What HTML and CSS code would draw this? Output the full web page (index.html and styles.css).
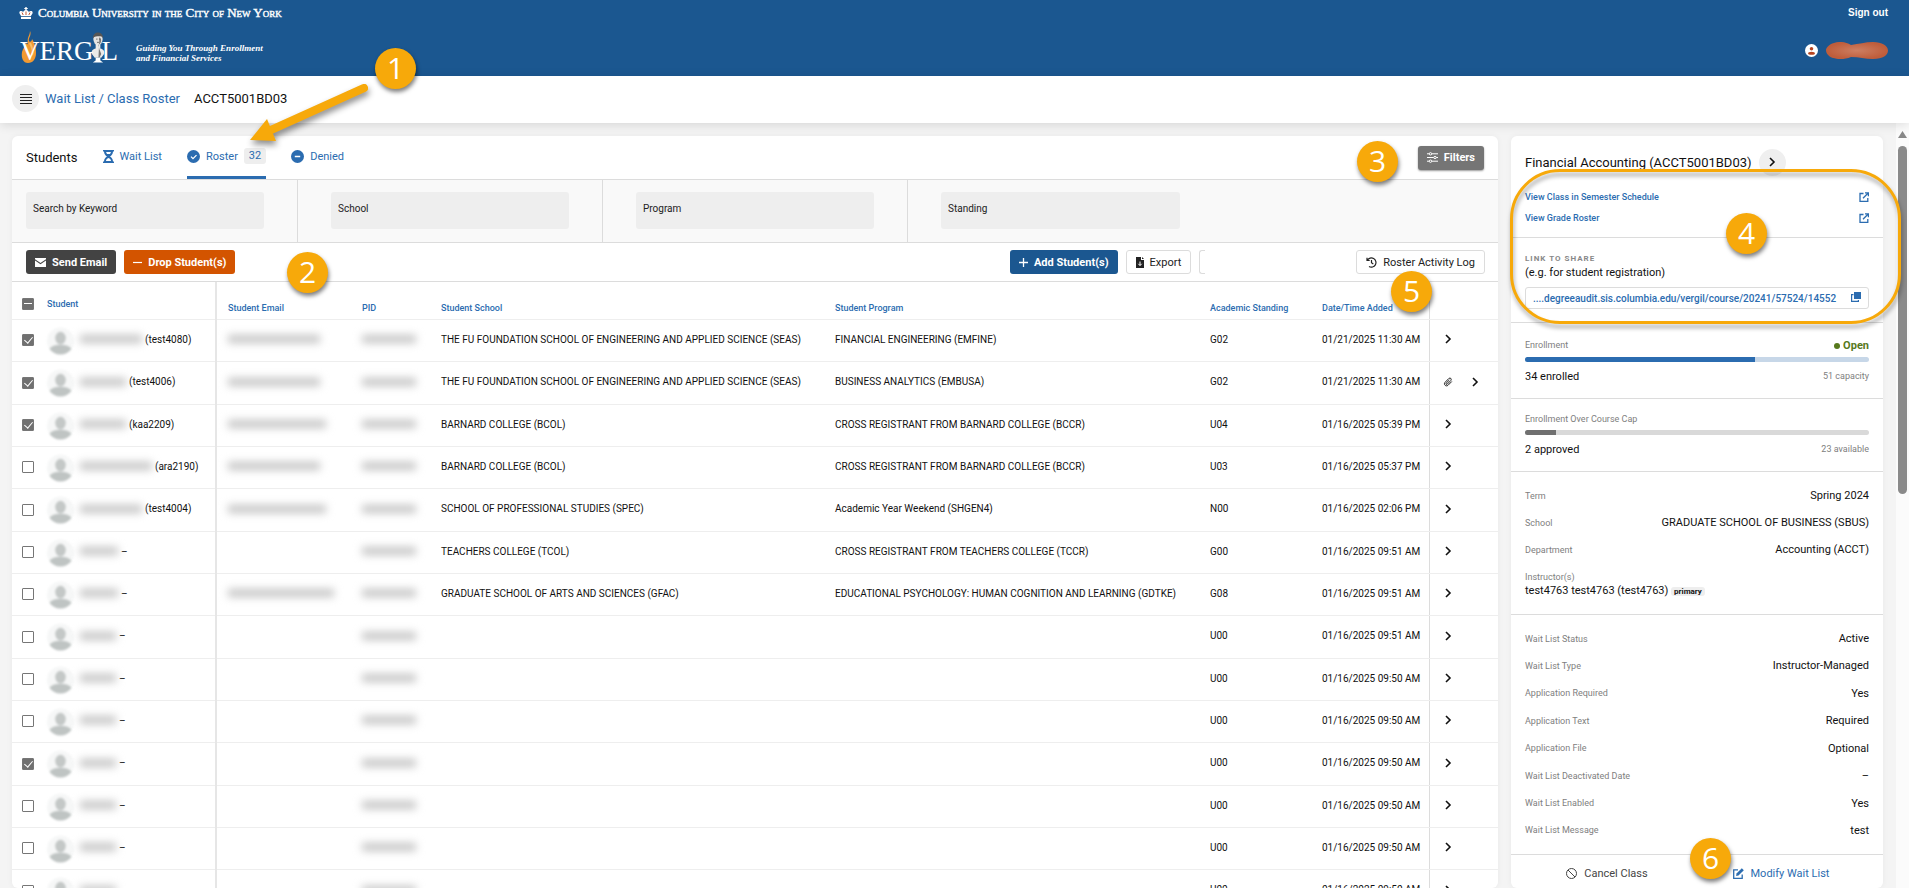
FILE: index.html
```html
<!DOCTYPE html>
<html lang="en">
<head>
  <meta charset="UTF-8" />
  <meta name="viewport" content="width=device-width, initial-scale=1.0"/>
  <title>Vergil - Class Roster</title>
  <link rel="stylesheet" href="styles.css">
</head>
<body>
  <!-- shared icons -->
  <svg class="sprite" aria-hidden="true">
    <symbol id="chevron" viewBox="0 0 10 10"><path d="M3 1l4 4-4 4" fill="none" stroke="currentColor" stroke-width="1.6"/></symbol>
    <symbol id="avatar" viewBox="0 0 28 28">
      <circle cx="14" cy="14" r="14" fill="#f6f7f7"/>
      <ellipse cx="14" cy="11" rx="5.5" ry="6.5" fill="#c4c8c7"/>
      <path d="M2.5 22c3-3 7-4 11.500-4s8.500 1 11.500 4a14 14 0 0 1-23 0z" fill="#bfc4c3"/>
    </symbol>
    <symbol id="external" viewBox="0 0 10 10"><path d="M4.500 1.500H1v7.800h7.800V6M6 .8h3.400v3.400M9.200 1L4 6.200" fill="none" stroke="currentColor" stroke-width="1.300"/></symbol>
  </svg>

  <header class="site-header">
    <div class="university">
      <svg class="crown" viewBox="0 0 14 12" fill="#fff"><path d="M6.300 0h1.400v1h1v1h-1v1.200c1.500.2 2 1 2 2C11 3.500 14 3.800 13.600 6c-.2 1.200-1.300 2-1.600 3H2C1.700 8 .6 7.200.4 6 0 3.800 3 3.500 4.300 5.200c0-1 .5-1.800 2-2V2h-1V1h1z"/><path d="M2 9.800h10V12H2z"/><path d="M3 5.500l1.200 2.500M11 5.500L9.800 8M7 4.500V8" stroke="#b5431f" stroke-width=".9"/></svg>
      <span class="university-name">Columbia University in the City of New York</span>
    </div>
    <a href="#" class="sign-out">Sign out</a>
    <div class="brand">
      <a href="#" class="logo" aria-label="Vergil">
        <svg class="flame" viewBox="0 0 17 32"><path d="M11 0c2 4-2 7-1 10 1 2 3 0 3-2 3 4 4 9 4 14 0 6-3 10-8 10-5 0-7-5-6-11 1-4 3-5 4-9 3 4 1-2 2-5 .5-2 2-4 2-7z" fill="#f39a32"/><path d="M11 12c2 4 4 8 2 12" fill="none" stroke="#f9c068" stroke-width="2"/></svg>
        <span class="logo-text">VERG</span>
        <svg class="bust" viewBox="0 0 15 32"><ellipse cx="7.500" cy="7" rx="5" ry="6.500" fill="#e5e2df"/><path d="M2 6c0-8 11-8 11 0-1-2-3-2-4-2-3 0-5 0-7 2z" fill="#555"/><path d="M5 12h5v5c3 1 5 2 4 6l-3 4H4l-3-4c-1-4 1-5 4-6z" fill="#eceae8"/><path d="M9 5c3 2 2 7-1 8l1 5 2 5-2 4h-1z" fill="#777"/><path d="M5 27h5v3l3 2H2l3-2z" fill="#fff"/><path d="M5.500 7h1.500M8.500 7h1.500M6.500 10.500h2" stroke="#444" stroke-width=".8"/></svg>
        <span class="logo-text">L</span>
      </a>
      <span class="tagline">Guiding You Through Enrollment<br>and Financial Services</span>
    </div>
    <div class="account">
      <svg class="user-icon" viewBox="0 0 14 14"><circle cx="7" cy="7" r="7" fill="#fff"/><circle cx="7" cy="5" r="1.900" fill="#b5431f"/><ellipse cx="7" cy="10" rx="3.700" ry="1.700" fill="#b5431f"/></svg>
      <svg class="user-name" viewBox="0 0 62 17"><defs><radialGradient id="blob"><stop offset="0" stop-color="#cd7f62"/><stop offset="1" stop-color="#bf5d3b"/></radialGradient></defs><path d="M8 1c6-2 12-1 17 2 8-1 14-3 22-3 9 0 15 4 15 8.500S57 17 47 17c-8 0-14-2-22-2-7 3-14 2-18 1C1 14 0 10 0 8s3-6 8-7z" fill="url(#blob)"/></svg>
    </div>
  </header>

  <nav class="breadcrumb">
    <button class="round-btn" aria-label="Menu">
      <svg width="12" height="12" viewBox="0 0 12 12"><path d="M0 1.500h12M0 4.500h12M0 7.500h12M0 10.500h12" stroke="#222"/></svg>
    </button>
    <a href="#">Wait List / Class Roster</a>
    <span>ACCT5001BD03</span>
  </nav>

  <div class="page">
    <main class="card roster">
      <div class="tabs">
        <h1>Students</h1>
        <a href="#" class="tab"><svg width="11" height="13" viewBox="0 0 11 13"><path d="M0 0h11v1.500h-1C10 4 8.500 5.500 7 6.500c1.500 1 3 2.500 3 5h1V13H0v-1.500h1C1 9 2.500 7.500 4 6.500 2.500 5.500 1 4 1 1.500H0z" fill="currentColor"/><path d="M3 2h5L7 4H4zM3 11c0-1.500 1-2.500 2.500-3C7 8.500 8 9.500 8 11z" fill="#fff"/></svg>Wait List</a>
        <a href="#" class="tab active"><svg width="13" height="13" viewBox="0 0 13 13"><circle cx="6.500" cy="6.500" r="6.500" fill="currentColor"/><path d="M4 6.600l2 2 3.500-3.500" fill="none" stroke="#fff" stroke-width="1.300"/></svg>Roster<span class="count">32</span></a>
        <a href="#" class="tab"><svg width="13" height="13" viewBox="0 0 13 13"><circle cx="6.500" cy="6.500" r="6.500" fill="currentColor"/><path d="M3.800 6.500h5.400" stroke="#fff" stroke-width="1.300"/></svg>Denied</a>
        <button class="btn btn-filters"><svg width="11" height="11" viewBox="0 0 11 11" fill="#757575" stroke="#fff"><path d="M0 1.800h11M0 5.500h11M0 9.200h11"/><circle cx="3.500" cy="1.800" r="1.200"/><circle cx="8" cy="5.500" r="1.200"/><circle cx="3.500" cy="9.200" r="1.200"/></svg>Filters</button>
      </div>

      <form class="filters">
        <div class="filter"><input type="text" aria-label="Search by Keyword" placeholder="Search by Keyword"></div>
        <div class="filter"><input type="text" aria-label="School" placeholder="School"></div>
        <div class="filter"><input type="text" aria-label="Program" placeholder="Program"></div>
        <div class="filter"><input type="text" aria-label="Standing" placeholder="Standing"></div>
      </form>

      <div class="actions">
        <button class="btn btn-dark"><svg width="11" height="9" viewBox="0 0 11 9" fill="#fff"><path d="M0 0h11v1.300L5.500 5 0 1.300z"/><path d="M0 2.500l5.500 3.700L11 2.500V9H0z"/></svg>Send Email</button>
        <button class="btn btn-orange"><svg width="9" height="9" viewBox="0 0 9 9"><path d="M0 4.500h9" stroke="#fff" stroke-width="1.200"/></svg>Drop Student(s)</button>
        <div class="actions-mid">
          <button class="btn btn-blue"><svg width="9" height="9" viewBox="0 0 9 9"><path d="M0 4.500h9M4.500 0v9" stroke="#fff" stroke-width="1.300"/></svg>Add Student(s)</button>
          <button class="btn btn-outline"><svg width="8" height="11" viewBox="0 0 8 11"><path d="M0 0h5v3h3v8H0z" fill="#222"/><path d="M6 0l2 2H6z" fill="#222"/><path d="M4 4.500v4M2.300 6.800L4 8.500l1.700-1.700" fill="none" stroke="#fff"/></svg>Export</button>
          <span class="btn-cut"></span>
        </div>
        <button class="btn btn-outline"><svg width="11" height="11" viewBox="0 0 11 11" fill="none" stroke="#222" stroke-width="1.200"><path d="M1 .8v2.700h2.700M1.300 3.400A4.600 4.600 0 1 1 3 9.500M5.500 3v2.700l1.800 1.300"/></svg>Roster Activity Log</button>
      </div>

      <table class="students">
        <colgroup>
          <col class="col-check"><col class="col-student"><col class="col-email"><col class="col-pid"><col class="col-school"><col><col class="col-standing"><col class="col-date"><col class="col-actions">
        </colgroup>
        <thead>
          <tr>
            <th class="check"><input type="checkbox" class="some" aria-label="Select all"></th>
            <th class="student">Student</th>
            <th>Student Email</th><th>PID</th><th>Student School</th><th>Student Program</th><th>Academic Standing</th><th>Date/Time Added</th><th class="row-actions"></th>
          </tr>
        </thead>
        <tbody>
          <tr>
            <td class="check"><input type="checkbox" aria-label="Select test4080" checked></td>
            <td class="student"><div class="person"><svg><use href="#avatar"/></svg><i class="hidden-text w62"></i>(test4080)</div></td>
            <td><i class="hidden-text w92"></i></td><td><i class="hidden-text w54"></i></td>
            <td>THE FU FOUNDATION SCHOOL OF ENGINEERING AND APPLIED SCIENCE (SEAS)</td><td>FINANCIAL ENGINEERING (EMFINE)</td><td>G02</td><td>01/21/2025 11:30 AM</td>
            <td class="row-actions"><button aria-label="Open"><svg><use href="#chevron"/></svg></button></td>
          </tr>
          <tr>
            <td class="check"><input type="checkbox" aria-label="Select test4006" checked></td>
            <td class="student"><div class="person"><svg><use href="#avatar"/></svg><i class="hidden-text w46"></i>(test4006)</div></td>
            <td><i class="hidden-text w92"></i></td><td><i class="hidden-text w54"></i></td>
            <td>THE FU FOUNDATION SCHOOL OF ENGINEERING AND APPLIED SCIENCE (SEAS)</td><td>BUSINESS ANALYTICS (EMBUSA)</td><td>G02</td><td>01/21/2025 11:30 AM</td>
            <td class="row-actions"><button aria-label="Attachment"><svg viewBox="0 0 10 10"><path d="M8.800 4.500L5 8.300C3 10 .2 7.500 2 5.400l3.800-3.900c1.500-1.300 3.300.4 2 2L4.200 7.200c-.8.700-1.800-.2-1.100-1L6.300 3" fill="none" stroke="#222"/></svg></button><button aria-label="Open"><svg><use href="#chevron"/></svg></button></td>
          </tr>
          <tr>
            <td class="check"><input type="checkbox" aria-label="Select kaa2209" checked></td>
            <td class="student"><div class="person"><svg><use href="#avatar"/></svg><i class="hidden-text w46"></i>(kaa2209)</div></td>
            <td><i class="hidden-text w98"></i></td><td><i class="hidden-text w54"></i></td>
            <td>BARNARD COLLEGE (BCOL)</td><td>CROSS REGISTRANT FROM BARNARD COLLEGE (BCCR)</td><td>U04</td><td>01/16/2025 05:39 PM</td>
            <td class="row-actions"><button aria-label="Open"><svg><use href="#chevron"/></svg></button></td>
          </tr>
          <tr>
            <td class="check"><input type="checkbox" aria-label="Select ara2190"></td>
            <td class="student"><div class="person"><svg><use href="#avatar"/></svg><i class="hidden-text w72"></i>(ara2190)</div></td>
            <td><i class="hidden-text w92"></i></td><td><i class="hidden-text w54"></i></td>
            <td>BARNARD COLLEGE (BCOL)</td><td>CROSS REGISTRANT FROM BARNARD COLLEGE (BCCR)</td><td>U03</td><td>01/16/2025 05:37 PM</td>
            <td class="row-actions"><button aria-label="Open"><svg><use href="#chevron"/></svg></button></td>
          </tr>
          <tr>
            <td class="check"><input type="checkbox" aria-label="Select test4004"></td>
            <td class="student"><div class="person"><svg><use href="#avatar"/></svg><i class="hidden-text w62"></i>(test4004)</div></td>
            <td><i class="hidden-text w98"></i></td><td><i class="hidden-text w54"></i></td>
            <td>SCHOOL OF PROFESSIONAL STUDIES (SPEC)</td><td>Academic Year Weekend (SHGEN4)</td><td>N00</td><td>01/16/2025 02:06 PM</td>
            <td class="row-actions"><button aria-label="Open"><svg><use href="#chevron"/></svg></button></td>
          </tr>
          <tr>
            <td class="check"><input type="checkbox" aria-label="Select student"></td>
            <td class="student"><div class="person"><svg><use href="#avatar"/></svg><i class="hidden-text w38"></i>–</div></td>
            <td></td><td><i class="hidden-text w54"></i></td>
            <td>TEACHERS COLLEGE (TCOL)</td><td>CROSS REGISTRANT FROM TEACHERS COLLEGE (TCCR)</td><td>G00</td><td>01/16/2025 09:51 AM</td>
            <td class="row-actions"><button aria-label="Open"><svg><use href="#chevron"/></svg></button></td>
          </tr>
          <tr>
            <td class="check"><input type="checkbox" aria-label="Select student"></td>
            <td class="student"><div class="person"><svg><use href="#avatar"/></svg><i class="hidden-text w38"></i>–</div></td>
            <td><i class="hidden-text w106"></i></td><td><i class="hidden-text w54"></i></td>
            <td>GRADUATE SCHOOL OF ARTS AND SCIENCES (GFAC)</td><td>EDUCATIONAL PSYCHOLOGY: HUMAN COGNITION AND LEARNING (GDTKE)</td><td>G08</td><td>01/16/2025 09:51 AM</td>
            <td class="row-actions"><button aria-label="Open"><svg><use href="#chevron"/></svg></button></td>
          </tr>
          <tr>
            <td class="check"><input type="checkbox" aria-label="Select student"></td>
            <td class="student"><div class="person"><svg><use href="#avatar"/></svg><i class="hidden-text w36"></i>–</div></td>
            <td></td><td><i class="hidden-text w54"></i></td><td></td><td></td><td>U00</td><td>01/16/2025 09:51 AM</td>
            <td class="row-actions"><button aria-label="Open"><svg><use href="#chevron"/></svg></button></td>
          </tr>
          <tr>
            <td class="check"><input type="checkbox" aria-label="Select student"></td>
            <td class="student"><div class="person"><svg><use href="#avatar"/></svg><i class="hidden-text w36"></i>–</div></td>
            <td></td><td><i class="hidden-text w54"></i></td><td></td><td></td><td>U00</td><td>01/16/2025 09:50 AM</td>
            <td class="row-actions"><button aria-label="Open"><svg><use href="#chevron"/></svg></button></td>
          </tr>
          <tr>
            <td class="check"><input type="checkbox" aria-label="Select student"></td>
            <td class="student"><div class="person"><svg><use href="#avatar"/></svg><i class="hidden-text w36"></i>–</div></td>
            <td></td><td><i class="hidden-text w54"></i></td><td></td><td></td><td>U00</td><td>01/16/2025 09:50 AM</td>
            <td class="row-actions"><button aria-label="Open"><svg><use href="#chevron"/></svg></button></td>
          </tr>
          <tr>
            <td class="check"><input type="checkbox" aria-label="Select student" checked></td>
            <td class="student"><div class="person"><svg><use href="#avatar"/></svg><i class="hidden-text w36"></i>–</div></td>
            <td></td><td><i class="hidden-text w54"></i></td><td></td><td></td><td>U00</td><td>01/16/2025 09:50 AM</td>
            <td class="row-actions"><button aria-label="Open"><svg><use href="#chevron"/></svg></button></td>
          </tr>
          <tr>
            <td class="check"><input type="checkbox" aria-label="Select student"></td>
            <td class="student"><div class="person"><svg><use href="#avatar"/></svg><i class="hidden-text w36"></i>–</div></td>
            <td></td><td><i class="hidden-text w54"></i></td><td></td><td></td><td>U00</td><td>01/16/2025 09:50 AM</td>
            <td class="row-actions"><button aria-label="Open"><svg><use href="#chevron"/></svg></button></td>
          </tr>
          <tr>
            <td class="check"><input type="checkbox" aria-label="Select student"></td>
            <td class="student"><div class="person"><svg><use href="#avatar"/></svg><i class="hidden-text w36"></i>–</div></td>
            <td></td><td><i class="hidden-text w54"></i></td><td></td><td></td><td>U00</td><td>01/16/2025 09:50 AM</td>
            <td class="row-actions"><button aria-label="Open"><svg><use href="#chevron"/></svg></button></td>
          </tr>
          <tr>
            <td class="check"><input type="checkbox" aria-label="Select student"></td>
            <td class="student"><div class="person"><svg><use href="#avatar"/></svg><i class="hidden-text w36"></i>–</div></td>
            <td></td><td><i class="hidden-text w54"></i></td><td></td><td></td><td>U00</td><td>01/16/2025 09:50 AM</td>
            <td class="row-actions"><button aria-label="Open"><svg><use href="#chevron"/></svg></button></td>
          </tr>
        </tbody>
      </table>
    </main>

    <aside class="card course">
      <div class="course-title">
        <h2>Financial Accounting (ACCT5001BD03)</h2>
        <button class="round-btn" aria-label="Collapse"><svg width="10" height="10"><use href="#chevron"/></svg></button>
      </div>
      <section class="links">
        <a href="#">View Class in Semester Schedule<svg width="10" height="10"><use href="#external"/></svg></a>
        <a href="#">View Grade Roster<svg width="10" height="10"><use href="#external"/></svg></a>
      </section>
      <section class="share">
        <h3>LINK TO SHARE</h3>
        <p>(e.g. for student registration)</p>
        <div class="share-url">
          <a href="#">....degreeaudit.sis.columbia.edu/vergil/course/20241/57524/14552</a>
          <button aria-label="Copy link"><svg width="10" height="10" viewBox="0 0 10 10"><path d="M3 0h7v7H3z" fill="currentColor"/><path d="M2.500 2.600H.6v6.800h6.800V8" fill="none" stroke="currentColor" stroke-width="1.200"/></svg></button>
        </div>
      </section>
      <section class="meter enrolled">
        <div class="line"><span class="label">Enrollment</span><b class="open">Open</b></div>
        <div class="bar"><div></div></div>
        <div class="line"><span>34 enrolled</span><span class="label">51 capacity</span></div>
      </section>
      <section class="meter over-cap">
        <div class="line"><span class="label">Enrollment Over Course Cap</span></div>
        <div class="bar"><div></div></div>
        <div class="line"><span>2 approved</span><span class="label">23 available</span></div>
      </section>
      <section class="details term">
        <div class="line"><span class="label">Term</span><span>Spring 2024</span></div>
        <div class="line"><span class="label">School</span><span>GRADUATE SCHOOL OF BUSINESS (SBUS)</span></div>
        <div class="line"><span class="label">Department</span><span>Accounting (ACCT)</span></div>
        <div class="instructor"><span class="label">Instructor(s)</span><div>test4763 test4763 (test4763) <span class="primary">primary</span></div></div>
      </section>
      <section class="details waitlist">
        <div class="line"><span class="label">Wait List Status</span><span>Active</span></div>
        <div class="line"><span class="label">Wait List Type</span><span>Instructor-Managed</span></div>
        <div class="line"><span class="label">Application Required</span><span>Yes</span></div>
        <div class="line"><span class="label">Application Text</span><span>Required</span></div>
        <div class="line"><span class="label">Application File</span><span>Optional</span></div>
        <div class="line"><span class="label">Wait List Deactivated Date</span><span>–</span></div>
        <div class="line"><span class="label">Wait List Enabled</span><span>Yes</span></div>
        <div class="line"><span class="label">Wait List Message</span><span>test</span></div>
      </section>
      <div class="course-actions">
        <button><svg width="11" height="11" viewBox="0 0 11 11" fill="none" stroke="currentColor"><circle cx="5.500" cy="5.500" r="5"/><path d="M2 2l7 7"/></svg>Cancel Class</button>
        <button class="modify"><svg width="11" height="11" viewBox="0 0 11 11"><path d="M5 1.800H.7v8.500h8.500V6.500" fill="none" stroke="currentColor" stroke-width="1.300"/><path d="M3.500 5.500L8.800.3l2 2L5.500 7.500l-2.400.5z" fill="currentColor"/></svg>Modify Wait List</button>
      </div>
    </aside>

    <div class="scrollbar" aria-hidden="true">
      <svg width="9" height="7" viewBox="0 0 9 7"><path d="M4.500 0L9 7H0z" fill="#888"/></svg>
      <div class="thumb"></div>
    </div>
  </div>

  <!-- numbered callouts on top of the page -->
  <svg class="arrow" viewBox="0 0 140 80"><path d="M124 18L31 60" stroke="#f7a90a" stroke-width="8" stroke-linecap="round"/><path d="M10 70L27 49l9 22z" fill="#f7a90a"/></svg>
  <div class="outline"></div>
  <div class="callout c1">1</div>
  <div class="callout c2">2</div>
  <div class="callout c3">3</div>
  <div class="callout c4">4</div>
  <div class="callout c5">5</div>
  <div class="callout c6">6</div>
</body>
</html>
```
FILE: styles.css
```css
* {
  margin: 0;
  padding: 0;
  box-sizing: border-box;
}

body {
  font-family: Roboto, "Open Sans", sans-serif;
  font-size: 11px;
  font-weight: 400;
  color: #111;
  background: #f4f4f4;
  height: 100vh;
  display: flex;
  flex-direction: column;
  overflow: hidden;
  position: relative;
}

a {
  color: #2b6cb0;
  text-decoration: none;
}

button {
  font-family: inherit;
  font-size: 11px;
  color: inherit;
  border: none;
  background: none;
  cursor: pointer;
}

.sprite {
  display: none;
}

/* header */
.site-header {
  flex: none;
  height: 76px;
  padding: 2px 21px 0 19px;
  background: #1b5790;
  color: #fff;
  display: grid;
  grid-template-columns: 1fr auto;
  grid-template-rows: 21px 46px;
  align-items: center;
}

.university {
  display: flex;
  align-items: center;
  gap: 5px;
}

.crown {
  width: 14px;
  height: 12px;
}

.university-name {
  font-family: "Liberation Serif", serif;
  font-size: 13px;
  font-variant: small-caps;
  -webkit-text-stroke: 0.4px #fff;
}

.sign-out {
  font-family: "Liberation Sans", sans-serif;
  font-size: 10px;
  font-weight: bold;
  color: #fff;
  text-align: right;
}

.brand {
  display: flex;
  align-items: center;
  gap: 18px;
}

.logo {
  display: flex;
  align-items: flex-end;
  color: #fff;
  height: 33px;
}

.logo-text {
  font-family: "Liberation Serif", serif;
  font-size: 27px;
  line-height: 23px;
}

.flame {
  width: 17px;
  height: 32px;
  margin-right: -16px;
}

.flame + .logo-text {
  z-index: 1;
}

.bust {
  width: 14px;
  height: 31px;
  margin: 0 -3px;
}

.tagline {
  font-family: "Liberation Serif", serif;
  font-size: 9px;
  font-weight: bold;
  font-style: italic;
  line-height: 10px;
  padding-top: 14px;
}

.account {
  display: flex;
  align-items: center;
  gap: 8px;
  padding-top: 8px;
}

.user-icon {
  width: 13px;
  height: 13px;
}

.user-name {
  width: 62px;
  height: 17px;
}

.breadcrumb {
  flex: none;
  height: 47px;
  padding: 0 12px 2px;
  background: #fff;
  box-shadow: 0 2px 10px rgba(0, 0, 0, 0.12);
  display: flex;
  align-items: center;
  font-size: 13px;
  z-index: 1;
}

.breadcrumb a {
  margin: 0 14px 0 6px;
}

.round-btn {
  width: 27px;
  height: 27px;
  border-radius: 50%;
  background: #efefef;
  display: flex;
  align-items: center;
  justify-content: center;
}

/* page */
.page {
  flex: 1;
  min-height: 0;
  padding-left: 12px;
  display: flex;
  gap: 13px;
}

.card {
  background: #fff;
  border-radius: 6px;
  margin-top: 13px;
  box-shadow: 0 0 6px rgba(0, 0, 0, 0.05);
}

.roster {
  flex: 1;
  overflow: hidden;
}

.tabs {
  height: 44px;
  padding: 0 14px;
  border-bottom: 1px solid #dcdcdc;
  display: flex;
  align-items: center;
  gap: 25px;
}

h1, h2 {
  font-size: 13px;
  font-weight: 400;
}

.tab {
  height: 43px;
  display: flex;
  align-items: center;
  gap: 6px;
  font-size: 11px;
  border-bottom: 3px solid transparent;
}

.tab.active {
  border-bottom-color: #2b6cb0;
}

.count {
  background: #eee;
  border-radius: 3px;
  padding: 0 5px;
  line-height: 16px;
}

.btn {
  height: 24px;
  padding: 0 9px;
  border-radius: 3px;
  color: #fff;
  font-weight: bold;
  white-space: nowrap;
  display: flex;
  align-items: center;
  gap: 6px;
}

.btn-filters {
  margin-left: auto;
  background: #757575;
  box-shadow: 0 1px 2px rgba(0, 0, 0, 0.4);
}

.btn-dark {
  background: #434343;
}

.btn-orange {
  background: #d35400;
}

.btn-blue {
  background: #1b5790;
}

.btn-outline {
  background: #fff;
  color: #222;
  border: 1px solid #dcdcdc;
  font-weight: 400;
}

.btn-cut {
  width: 6px;
  height: 24px;
  border: 1px solid #dcdcdc;
  border-right: none;
  border-radius: 3px 0 0 3px;
}

.filters {
  background: #f9f9f9;
  border-bottom: 1px solid #dcdcdc;
  display: flex;
  height: 63px;
}

.filter {
  width: 305px;
  padding: 12px 33px 0;
  border-right: 1px solid #dcdcdc;
}

.filter:first-child {
  width: 286px;
  padding-left: 14px;
}

.filter:last-child {
  border-right: none;
}

.filter input {
  width: 100%;
  height: 37px;
  padding: 0 7px 4px;
  border: none;
  border-radius: 3px;
  background: #eee;
  font-family: inherit;
  font-size: 10px;
}

.filter input::placeholder {
  color: #222;
}

.actions {
  height: 39px;
  padding: 0 13px 0 14px;
  border-bottom: 1px solid #dcdcdc;
  display: flex;
  align-items: center;
  gap: 8px;
}

.actions-mid {
  margin-left: auto;
  margin-right: 143px;
  display: flex;
  gap: 8px;
}

/* students table */
.students {
  width: 100%;
  table-layout: fixed;
  border-collapse: collapse;
  font-size: 10px;
}

.col-check { width: 35px; }
.col-student { width: 169px; }
.col-email { width: 135px; }
.col-pid { width: 79px; }
.col-school { width: 394px; }
.col-standing { width: 112px; }
.col-date { width: 118px; }
.col-actions { width: 69px; }

.students th,
.students td {
  text-align: left;
  padding-left: 11px;
  padding-bottom: 2px;
  border-bottom: 1px solid #eee;
  white-space: nowrap;
}

.students th {
  height: 37px;
  padding-top: 17px;
  color: #2b6cb0;
  font-size: 9px;
  font-weight: 500;
}

.students th.student {
  padding-top: 10px;
}

.students th.check {
  padding-top: 10px;
}

.students tbody tr {
  height: 42px;
}

.students tbody tr:nth-child(3n+2) {
  height: 43px;
}

.students .check {
  padding-left: 10px;
}

.students td.check,
.students td.row-actions {
  padding-bottom: 0;
}

.students .student {
  padding-left: 0;
  border-right: 2px solid #e6e6e6;
}

.students .row-actions {
  border-left: 1px solid #dcdcdc;
  padding-left: 13px;
}

.check input {
  appearance: none;
  display: block;
  width: 12px;
  height: 12px;
  border: 1px solid #767676;
  border-radius: 1px;
}

.check input:checked,
.check .some {
  background: #707070;
}

.check input:checked::after {
  content: "";
  display: block;
  width: 4px;
  height: 7px;
  margin-left: 3px;
  border: solid #fff;
  border-width: 0 1px 1px 0;
  transform: rotate(40deg);
}

.check .some::after {
  content: "";
  display: block;
  width: 8px;
  height: 1px;
  margin: 4px 1px;
  background: #fff;
}

.person {
  display: flex;
  align-items: center;
  gap: 3px;
}

.person svg {
  width: 27px;
  height: 28px;
  margin-right: 3px;
  margin-top: 3px;
  filter: blur(1px);
}

.hidden-text {
  display: block;
  height: 8px;
  background: #c4c4c4;
  filter: blur(4px);
}

.w36 { width: 36px; }
.w38 { width: 38px; }
.w46 { width: 46px; }
.w54 { width: 54px; }
.w62 { width: 62px; }
.w72 { width: 72px; }
.w92 { width: 92px; }
.w98 { width: 98px; }
.w106 { width: 106px; }

.row-actions button {
  width: 10px;
  height: 10px;
  margin-right: 17px;
}

.row-actions svg {
  display: block;
  width: 10px;
  height: 10px;
}

/* course panel */
.course {
  width: 372px;
  flex: none;
  display: flex;
  flex-direction: column;
}

.course section {
  padding: 0 14px;
  border-bottom: 1px solid #dcdcdc;
}

.course-title {
  height: 50px;
  padding: 2px 14px 0;
  display: flex;
  align-items: center;
  gap: 7px;
}

.links a {
  display: flex;
  justify-content: space-between;
  align-items: center;
  height: 21px;
  font-size: 9px;
  font-weight: 500;
}

.course .links {
  height: 52px;
}

.course .share {
  height: 85px;
  padding-top: 15px;
}

.share h3 {
  font-size: 8px;
  line-height: 12px;
  letter-spacing: 1px;
  color: #888;
}

.share p {
  line-height: 16px;
}

.share-url {
  height: 22px;
  margin-top: 6px;
  padding: 0 7px;
  border: 1px solid #dcdcdc;
  border-radius: 3px;
  font-size: 10px;
  font-weight: 500;
  display: flex;
  align-items: center;
  justify-content: space-between;
}

.share-url button {
  color: #2b6cb0;
}

.line {
  display: flex;
  justify-content: space-between;
  align-items: center;
}

.label {
  font-size: 9px;
  color: #808080;
}

.course .meter {
  height: 76px;
  padding-top: 15px;
}

.course .over-cap {
  height: 73px;
  padding-top: 13px;
}

.meter .line {
  height: 14px;
}

.bar {
  height: 5px;
  margin: 5px 0 7px;
  border-radius: 3px;
  background: #c7d7e8;
  overflow: hidden;
}

.bar div {
  width: 67%;
  height: 100%;
  background: #2b6cb0;
}

.over-cap .bar {
  background: #d9d9d9;
  margin-top: 4px;
}

.over-cap .bar div {
  width: 9%;
  background: #707070;
}

.open {
  color: #57791c;
}

.open::before {
  content: "";
  display: inline-block;
  width: 6px;
  height: 6px;
  margin-right: 3px;
  border-radius: 50%;
  background: #57791c;
}

.course .details {
  padding-top: 10px;
}

.details .line {
  height: 27px;
}

.course .term {
  height: 143px;
}

.course .waitlist {
  height: 240px;
  padding-bottom: 10px;
  display: flex;
  flex-direction: column;
  justify-content: space-between;
}

.instructor {
  padding-top: 7px;
  line-height: 14px;
}

.instructor .label {
  display: block;
}

.primary {
  background: #eee;
  border-radius: 3px;
  padding: 0 3px;
  font-size: 8px;
  font-weight: bold;
}

.course-actions {
  flex: 1;
  padding: 4px 0 0 4px;
  display: grid;
  grid-template-columns: 1fr 1fr;
  align-items: center;
}

.course-actions button {
  display: flex;
  align-items: center;
  justify-content: center;
  gap: 7px;
  font-size: 11px;
  color: #444;
}

.course-actions .modify {
  color: #2b6cb0;
  padding-right: 20px;
}

.scrollbar {
  width: 13px;
  background: #fbfbfb;
  display: flex;
  flex-direction: column;
  align-items: center;
  gap: 8px;
  padding-top: 8px;
}

.thumb {
  width: 9px;
  height: 46%;
  border-radius: 5px;
  background: #8a8a8a;
}

/* callouts */
.callout {
  position: absolute;
  z-index: 3;
  width: 41px;
  height: 41px;
  border-radius: 50%;
  background: #f7a90a;
  color: #fff;
  box-shadow: 1px 3px 4px rgba(0, 0, 0, 0.5);
  font-family: "Open Sans", sans-serif;
  font-size: 30px;
  line-height: 40px;
  text-align: center;
}

.c1 { left: 375px; top: 48px; }
.c2 { left: 287px; top: 252px; }
.c3 { right: 511px; top: 141px; }
.c4 { right: 142px; top: 213px; }
.c5 { right: 477px; top: 271px; }
.c6 { right: 178px; top: 838px; }

.arrow {
  position: absolute;
  z-index: 2;
  left: 240px;
  top: 70px;
  width: 140px;
  height: 80px;
  filter: drop-shadow(1px 4px 3px rgba(0, 0, 0, 0.45));
}

.outline {
  position: absolute;
  z-index: 2;
  right: 8px;
  top: 169px;
  width: 391px;
  height: 155px;
  border: 3px solid #f7a90a;
  border-radius: 50px;
  filter: drop-shadow(1px 4px 2px rgba(0, 0, 0, 0.35));
}
```
